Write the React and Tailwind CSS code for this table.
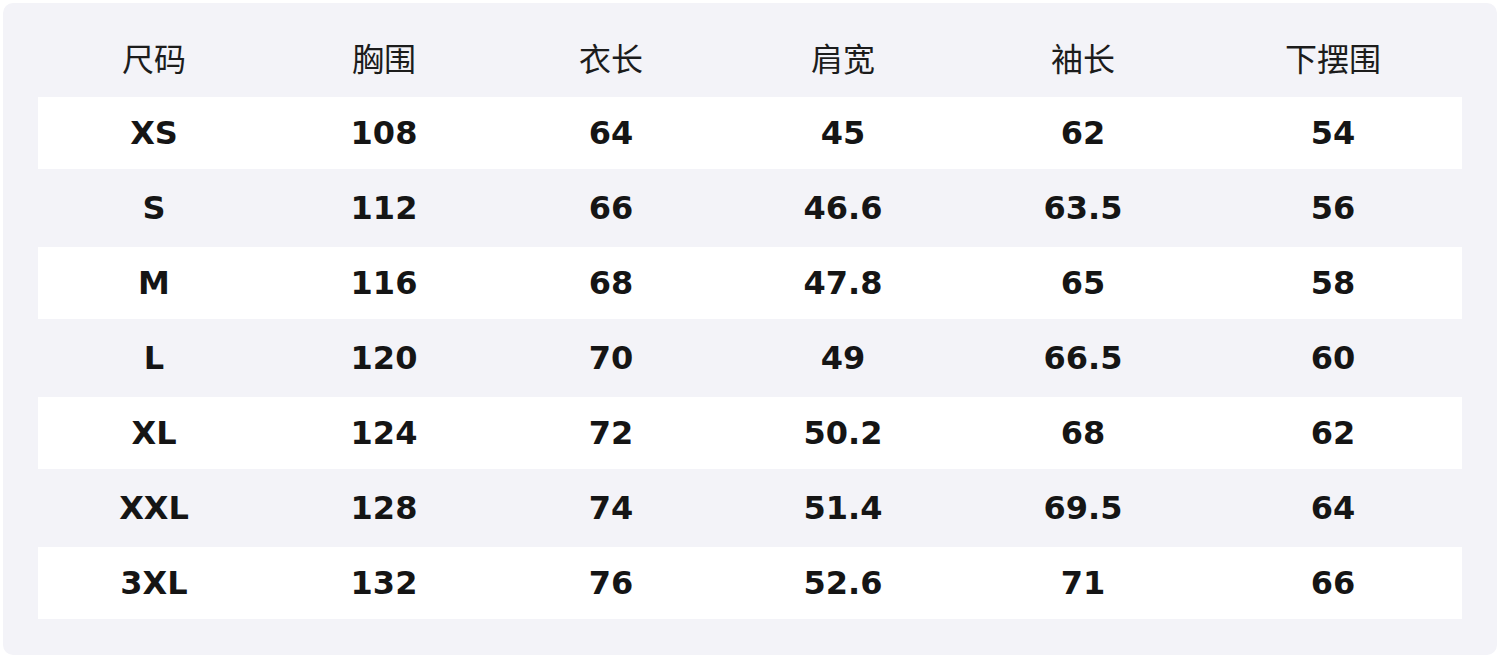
import React from "react";

const headers = ["尺码", "胸围", "衣长", "肩宽", "袖长", "下摆围"];
const rows = [
  ["XS", "108", "64", "45", "62", "54"],
  ["S", "112", "66", "46.6", "63.5", "56"],
  ["M", "116", "68", "47.8", "65", "58"],
  ["L", "120", "70", "49", "66.5", "60"],
  ["XL", "124", "72", "50.2", "68", "62"],
  ["XXL", "128", "74", "51.4", "69.5", "64"],
  ["3XL", "132", "76", "52.6", "71", "66"],
];
const widths = ["w-[232px]", "w-[228px]", "w-[226px]", "w-[238px]", "w-[242px]", "w-[258px]"];

export default function App() {
  return (
    <div className="w-[1500px] h-[658px] bg-white p-[3px]">
      <div className="h-full w-full bg-[#f3f3f8] rounded-[10px] px-[35px]">
        <div className="h-[94px] pt-[14px] flex items-center font-['Noto_Sans_CJK_SC','Noto_Sans',sans-serif] text-[32px] text-[#1c1c1c] leading-none">
          {headers.map((h, i) => (
            <div key={i} className={`${widths[i]} text-center`}>{h}</div>
          ))}
        </div>
        <div className="flex flex-col gap-[3px]">
          {rows.map((r, ri) => (
            <div
              key={ri}
              className={`h-[72px] flex items-center font-['DejaVu_Sans',sans-serif] font-bold text-[32px] text-[#151515] ${ri % 2 === 0 ? "bg-white" : ""}`}
            >
              {r.map((c, ci) => (
                <div key={ci} className={`${widths[ci]} text-center`}>{c}</div>
              ))}
            </div>
          ))}
        </div>
      </div>
    </div>
  );
}
